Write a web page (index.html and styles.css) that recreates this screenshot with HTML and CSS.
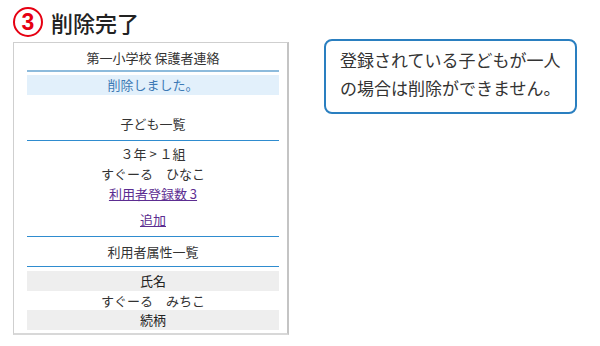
FILE: index.html
```html
<!DOCTYPE html>
<html lang="ja">
<head>
    <meta charset="UTF-8">
    <title>削除完了</title>
    <link rel="stylesheet" href="styles.css">
</head>
<body>
    <div class="page">
        <!-- 左：画面 -->
        <div class="left">
            <h1 class="step-title"><span class="step-num">3</span>削除完了</h1>
            <div class="phone">
                <div class="app-header">第一小学校 保護者連絡</div>
                <div class="notice">削除しました。</div>

                <div class="section-title first">子ども一覧</div>
                <div class="row">３年 &gt; １組</div>
                <div class="row">すぐーる　ひなこ</div>
                <div class="row"><a href="#">利用者登録数 3</a></div>
                <div class="row add"><a href="#">追加</a></div>

                <div class="section-title">利用者属性一覧</div>
                <div class="attr-label">氏名</div>
                <div class="attr-value">すぐーる　みちこ</div>
                <div class="attr-label">続柄</div>
            </div>
        </div>

        <!-- 右：説明 -->
        <div class="callout">登録されている子どもが一人<br>の場合は削除ができません。</div>
    </div>
</body>
</html>
```

FILE: styles.css
```css
body {
    margin: 0;
    background: #fff;
    color: #333;
    font-family: "Noto Sans CJK JP", "Noto Sans", sans-serif;
}

.page {
    display: flex;
    align-items: flex-start;
}

.left {
    padding-left: 13px;
}

/* 見出し */
.step-title {
    display: flex;
    align-items: center;
    gap: 8px;
    margin: 0;
    padding-top: 7px;
    height: 30px;
    margin-bottom: 5px;
    font-size: 22px;
    font-weight: 500;
    color: #222;
    line-height: 30px;
}

.step-num {
    box-sizing: border-box;
    width: 30px;
    height: 30px;
    border: 2px solid #e60012;
    border-radius: 50%;
    color: #e60012;
    font-family: "Liberation Sans", sans-serif;
    font-size: 23px;
    font-weight: bold;
    line-height: 26px;
    text-align: center;
}

/* 画面枠 */
.phone {
    box-sizing: border-box;
    width: 276px;
    height: 293px;
    border: 1px solid #cfcfcf;
    border-right: 2px solid #c4c4c4;
    border-bottom: 2px solid #d8d8d8;
    padding: 0 8px 0 13px;
    font-size: 13px;
    text-align: center;
}

.app-header {
    height: 27px;
    line-height: 29px;
    border-bottom: 2px solid #8dbbdc;
}

.notice {
    margin-top: 3px;
    height: 20px;
    line-height: 20px;
    background: #e2f0fb;
    color: #3d7ab5;
}

.section-title {
    margin-top: 5px;
    line-height: 20px;
    padding-bottom: 4px;
    border-bottom: 1px solid #2f8ccf;
}

.section-title.first {
    margin-top: 19px;
    padding-bottom: 6px;
}

.row {
    line-height: 20px;
}

.row:nth-of-type(4) {
    margin-top: 3px;
}

.add {
    margin-top: 6px;
    padding-bottom: 6px;
    border-bottom: 1px solid #2f8ccf;
}

a {
    color: #5c2d91;
}

.attr-label {
    height: 20px;
    line-height: 20px;
    background: #eeeeee;
    color: #222;
}

.section-title + .attr-label {
    margin-top: 4px;
}

.attr-value {
    height: 19px;
    line-height: 19px;
}

/* 説明の吹き出し */
.callout {
    box-sizing: border-box;
    width: 253px;
    height: 75px;
    margin: 39px 0 0 35px;
    padding: 5px 0 0 14px;
    border: 2px solid #2a7fc0;
    border-radius: 8px;
    font-size: 17px;
    line-height: 28px;
    color: #333;
}
```
